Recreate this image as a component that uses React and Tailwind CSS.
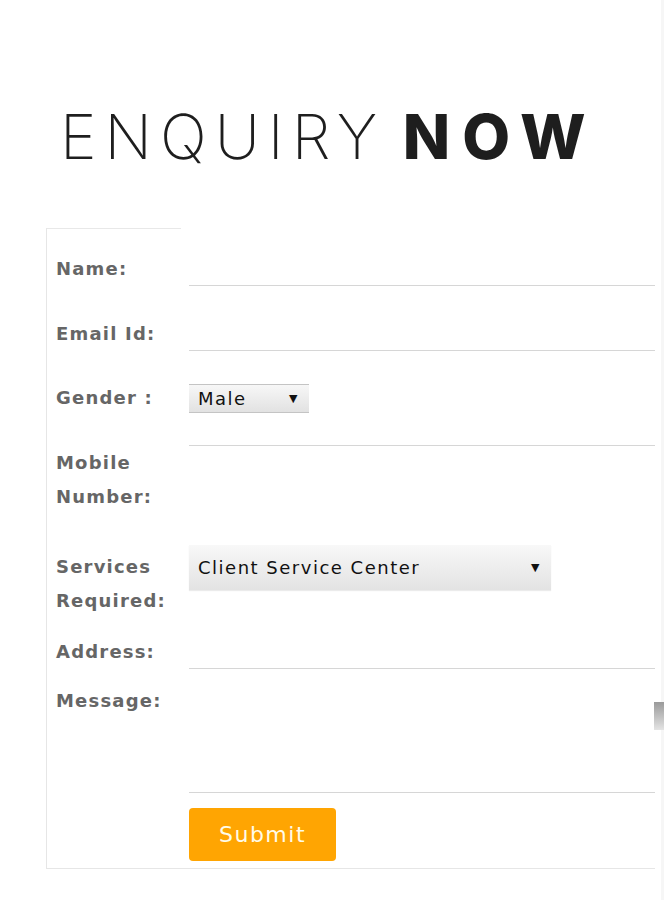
import { useState } from 'react'

const label = "font-['DejaVu_Sans',sans-serif] font-bold text-[18px] leading-[34px] tracking-[1.2px] text-[#666]"
const line = 'border-b border-[#d6d6d6]'

function Caret() {
  return <span className="text-[11px] leading-none text-[#111]">▼</span>
}

export default function App() {
  const [gender] = useState('Male')
  const [service] = useState('Client Service Center')

  return (
    <div className="relative w-[664px] h-[900px] overflow-hidden bg-white">
      <h1 className="pt-[106px] pl-[60px] text-[62px] leading-none text-[#1e1e1e] font-['Inter',sans-serif] whitespace-nowrap">
        <span className="font-extralight tracking-[8px]">ENQUIRY</span>{' '}
        <span className="font-extrabold tracking-[12px]">NOW</span>
      </h1>

      <form className="mt-[60px] ml-[46px] w-[609px] border-l border-b border-[#e6e6e6]">
        <div className="h-px w-[134px] bg-[#e8e8e8]" />

        {/* Name */}
        <div className="flex h-[57px] items-end">
          <div className={`w-[142px] shrink-0 pl-[9px] ${label}`}>Name:</div>
          <div className={`flex-1 h-full ${line}`} />
        </div>

        {/* Email */}
        <div className="flex h-[65px] items-end">
          <div className={`w-[142px] shrink-0 pl-[9px] ${label}`}>Email Id:</div>
          <div className={`flex-1 h-full ${line}`} />
        </div>

        {/* Gender */}
        <div className="flex h-[95px] items-start">
          <div className={`w-[142px] shrink-0 pl-[9px] pt-[30px] ${label}`}>Gender :</div>
          <div className={`flex-1 h-full ${line}`}>
            <div className="mt-[33px] flex h-[29px] w-[120px] items-center justify-between border-t border-b border-[#c4c4c4] bg-gradient-to-b from-[#f7f7f7] to-[#e2e2e2] pl-[9px] pr-[10px] font-['DejaVu_Sans',sans-serif] text-[18px] tracking-[1.5px] text-[#111]">
              <span>{gender}</span>
              <Caret />
            </div>
          </div>
        </div>

        {/* Mobile */}
        <div className="flex h-[99px] items-start">
          <div className={`w-[142px] shrink-0 pl-[9px] ${label}`}>
            Mobile
            <br />
            Number:
          </div>
          <div className="flex-1" />
        </div>

        {/* Services */}
        <div className="flex h-[73px] items-start">
          <div className={`w-[142px] shrink-0 pl-[9px] pt-[5px] ${label}`}>
            Services
            <br />
            Required:
          </div>
          <div className="flex-1">
            <div className="flex h-[45px] w-[362px] items-center justify-between bg-gradient-to-b from-[#f8f8f8] to-[#e3e3e3] pl-[9px] pr-[10px] shadow-[0_1px_1px_rgba(0,0,0,0.08)] font-['DejaVu_Sans',sans-serif] text-[18px] tracking-[1.5px] text-[#111]">
              <span>{service}</span>
              <Caret />
            </div>
          </div>
        </div>

        {/* Address */}
        <div className="flex h-[51px] items-end">
          <div className={`w-[142px] shrink-0 pl-[9px] ${label}`}>Address:</div>
          <div className={`flex-1 h-full ${line}`} />
        </div>

        {/* Message */}
        <div className="flex h-[124px] items-start">
          <div className={`w-[142px] shrink-0 pl-[9px] pt-[15px] ${label}`}>Message:</div>
          <div className={`flex-1 h-full ${line}`} />
        </div>

        {/* Submit */}
        <div className="flex h-[75px] items-start">
          <div className="w-[142px] shrink-0" />
          <button
            type="button"
            className="mt-[15px] h-[53px] w-[147px] rounded-[4px] bg-[#ffa502] font-['DejaVu_Sans',sans-serif] text-[22px] tracking-[1.5px] text-[#fffbe8]"
          >
            Submit
          </button>
        </div>
      </form>

      {/* page edge + scroll thumb */}
      <div className="absolute right-0 top-0 h-full w-[3px] bg-[#f6f6f6]" />
      <div className="absolute right-0 top-[702px] h-[28px] w-[10px] bg-gradient-to-b from-[#9a9a9a] to-[#e4e4e4]" />
    </div>
  )
}
